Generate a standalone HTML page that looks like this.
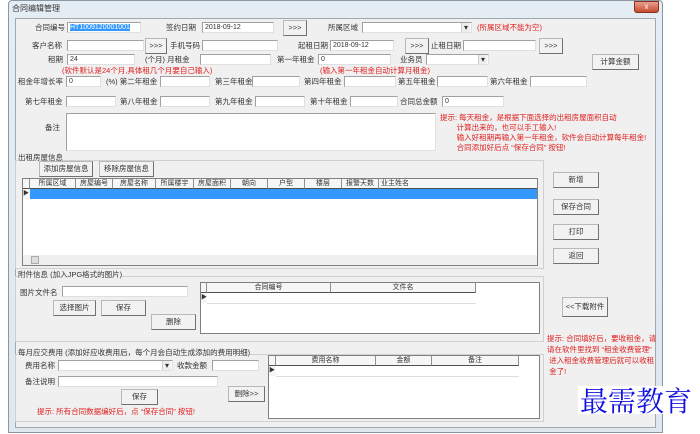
<!DOCTYPE html>
<html><head><meta charset="utf-8"><style>
*{box-sizing:border-box;margin:0;padding:0}
body{width:700px;height:434px;background:#fff;position:relative;overflow:hidden;font-family:"Liberation Sans","Noto Sans CJK SC",sans-serif;font-size:7.5px;color:#333}
.a{position:absolute;white-space:nowrap;line-height:1}
.win{position:absolute;left:8px;top:0;width:655px;height:433px;background:linear-gradient(#e4ecf4,#dfe7ef);border:1px solid #8a96a4;border-radius:4px 4px 0 0}
.cl{position:absolute;left:15px;top:18px;width:641px;height:410px;background:#f0f0f0;border:1px solid #a0a8b0}
.tb{position:absolute;background:#fff;border:1px solid #a0a0a0;border-right-color:#e0e0e0;border-bottom-color:#e0e0e0;height:11px;font-size:7px;padding-left:2px;line-height:9px}
.bt{position:absolute;background:#f2f2f2;border:1px solid #b8b8b8;border-right-color:#707070;border-bottom-color:#707070;font-size:7.5px;text-align:center;line-height:14px;height:16px}
.r{color:#e02020}
.gb{position:absolute;border:1px solid #d0d0d0}
.grid{position:absolute;background:#fff;border:1px solid #808080}
.hd{position:absolute;top:0;height:10px;border-right:1px solid #909090;border-bottom:1px solid #505050;background:#f6f6f6;font-size:7px;text-align:center;line-height:10px}
.cb:after{content:"▾";position:absolute;right:1px;top:0;font-size:8px;width:8px;height:9px;background:#eee;border-left:1px solid #ccc;text-align:center;line-height:9px}
</style></head><body>
<div class="win"></div>
<div class="a" style="left:12px;top:5px;font-size:8px">合同编辑管理</div>
<div style="position:absolute;left:634px;top:1px;width:25px;height:12px;background:linear-gradient(#e8a090,#c84a30);border:1px solid #8a3020;border-radius:0 0 3px 3px;color:#fff;font-size:8px;text-align:center;line-height:10px">x</div>
<div class="cl"></div>

<div class="a" style="left:35px;top:24px">合同编号</div>
<div class="tb" style="left:67px;top:22px;width:74px"><span style="background:#3399ff;color:#fff">HT1009120001001</span></div>
<div class="a" style="left:166px;top:24px">签约日期</div>
<div class="tb" style="left:202px;top:22px;width:72px">2018-09-12</div>
<div class="bt" style="left:283px;top:20px;width:24px">&gt;&gt;&gt;</div>
<div class="a" style="left:328px;top:24px">所属区域</div>
<div class="tb cb" style="left:362px;top:22px;width:110px"></div>
<div class="a r" style="left:477px;top:24px">(所属区域不能为空)</div>

<div class="a" style="left:32px;top:42px">客户名称</div>
<div class="tb" style="left:67px;top:40px;width:77px"></div>
<div class="bt" style="left:145px;top:38px;width:22px">&gt;&gt;&gt;</div>
<div class="a" style="left:170px;top:42px">手机号码</div>
<div class="tb" style="left:202px;top:40px;width:76px"></div>
<div class="a" style="left:298px;top:42px">起租日期</div>
<div class="tb" style="left:330px;top:40px;width:64px">2018-09-12</div>
<div class="bt" style="left:405px;top:38px;width:24px">&gt;&gt;&gt;</div>
<div class="a" style="left:431px;top:42px">止租日期</div>
<div class="tb" style="left:463px;top:40px;width:73px"></div>
<div class="bt" style="left:539px;top:38px;width:24px">&gt;&gt;&gt;</div>

<div class="a" style="left:48px;top:56px">租期</div>
<div class="tb" style="left:67px;top:54px;width:68px">24</div>
<div class="a" style="left:145px;top:56px">(个月) 月租金</div>
<div class="tb" style="left:200px;top:54px;width:71px"></div>
<div class="a" style="left:277px;top:56px">第一年租金</div>
<div class="tb" style="left:318px;top:54px;width:73px">0</div>
<div class="a" style="left:400px;top:56px">业务员</div>
<div class="tb cb" style="left:426px;top:54px;width:63px"></div>
<div class="bt" style="left:592px;top:54px;width:47px">计算金额</div>
<div class="a r" style="left:62px;top:67px">(软件默认是24个月,具体租几个月要自己输入)</div>
<div class="a r" style="left:320px;top:67px">(输入第一年租金自动计算月租金)</div>

<div class="a" style="left:18px;top:78px">租金年增长率</div>
<div class="tb" style="left:66px;top:76px;width:35px">0</div>
<div class="a" style="left:106px;top:78px">(%) 第二年租金</div>
<div class="tb" style="left:160px;top:76px;width:50px"></div>
<div class="a" style="left:215px;top:78px">第三年租金</div>
<div class="tb" style="left:252px;top:76px;width:48px"></div>
<div class="a" style="left:304px;top:78px">第四年租金</div>
<div class="tb" style="left:344px;top:76px;width:52px"></div>
<div class="a" style="left:398px;top:78px">第五年租金</div>
<div class="tb" style="left:437px;top:76px;width:51px"></div>
<div class="a" style="left:490px;top:78px">第六年租金</div>
<div class="tb" style="left:530px;top:76px;width:57px"></div>

<div class="a" style="left:25px;top:98px">第七年租金</div>
<div class="tb" style="left:66px;top:96px;width:50px"></div>
<div class="a" style="left:120px;top:98px">第八年租金</div>
<div class="tb" style="left:160px;top:96px;width:50px"></div>
<div class="a" style="left:215px;top:98px">第九年租金</div>
<div class="tb" style="left:255px;top:96px;width:50px"></div>
<div class="a" style="left:310px;top:98px">第十年租金</div>
<div class="tb" style="left:350px;top:96px;width:48px"></div>
<div class="a" style="left:400px;top:98px">合同总金额</div>
<div class="tb" style="left:442px;top:96px;width:62px">0</div>
<div class="a" style="left:45px;top:124px">备注</div>
<div class="tb" style="left:66px;top:113px;width:370px;height:38px"></div>
<div class="a r" style="left:440px;top:113px;line-height:10px;font-size:7.5px">提示: 每天租金，是根据下面选择的出租房屋面积自动<br>&nbsp;&nbsp;&nbsp;&nbsp;&nbsp;&nbsp;&nbsp;&nbsp;计算出来的，也可以手工输入!<br>&nbsp;&nbsp;&nbsp;&nbsp;&nbsp;&nbsp;&nbsp;&nbsp;输入好租期再输入第一年租金，软件会自动计算每年租金!<br>&nbsp;&nbsp;&nbsp;&nbsp;&nbsp;&nbsp;&nbsp;&nbsp;合同添加好后点 “保存合同” 按钮!</div>

<div class="gb" style="left:15px;top:160px;width:529px;height:109px"></div>
<div class="a" style="left:18px;top:154px;background:#f0f0f0">出租房屋信息</div>
<div class="bt" style="left:39px;top:161px;width:54px">添加房屋信息</div>
<div class="bt" style="left:99px;top:161px;width:55px">移除房屋信息</div>
<div class="grid" style="left:22px;top:178px;width:516px;height:88px;overflow:hidden">
<div class="hd" style="left:0;width:7px"></div>
<div class="hd" style="left:7px;width:46px">所属区域</div>
<div class="hd" style="left:53px;width:37px">房屋编号</div>
<div class="hd" style="left:90px;width:43px">房屋名称</div>
<div class="hd" style="left:133px;width:38px">所属楼宇</div>
<div class="hd" style="left:171px;width:37px">房屋面积</div>
<div class="hd" style="left:208px;width:37px">朝向</div>
<div class="hd" style="left:245px;width:37px">户型</div>
<div class="hd" style="left:282px;width:37px">楼层</div>
<div class="hd" style="left:319px;width:37px">报警天数</div>
<div class="hd" style="left:356px;width:160px;text-align:left;border-right:none">&nbsp;业主姓名</div>
<div style="position:absolute;left:7px;top:10px;width:509px;height:10px;background:#3399ff"></div>
<div style="position:absolute;left:0;top:10px;width:7px;height:10px;background:#f6f6f6;font-size:6px;line-height:10px">▶</div>
<div style="position:absolute;left:0;top:76px;width:516px;height:10px;background:#f0f0f0"><div style="position:absolute;left:8px;top:1px;width:8px;height:8px;background:#ddd;border:1px solid #aaa"></div></div>
</div>
<div class="bt" style="left:553px;top:172px;width:46px">新增</div>
<div class="bt" style="left:553px;top:199px;width:46px">保存合同</div>
<div class="bt" style="left:553px;top:224px;width:46px">打印</div>
<div class="bt" style="left:553px;top:248px;width:46px">返回</div>

<div class="gb" style="left:15px;top:276px;width:529px;height:66px"></div>
<div class="a" style="left:18px;top:271px;background:#f0f0f0">附件信息 (加入JPG格式的图片)</div>
<div class="a" style="left:20px;top:289px">图片文件名</div>
<div class="tb" style="left:62px;top:286px;width:126px"></div>
<div class="bt" style="left:53px;top:300px;width:43px">选择图片</div>
<div class="bt" style="left:101px;top:300px;width:45px">保存</div>
<div class="bt" style="left:151px;top:314px;width:45px">删除</div>
<div class="grid" style="left:200px;top:282px;width:340px;height:52px;overflow:hidden">
<div class="hd" style="left:0;width:6px"></div>
<div class="hd" style="left:6px;width:124px">合同编号</div>
<div class="hd" style="left:130px;width:145px">文件名</div>
<div style="position:absolute;left:0;top:10px;width:6px;height:10px;background:#f6f6f6;font-size:6px;line-height:10px">▶</div>
<div style="position:absolute;left:6px;top:20px;width:269px;border-top:1px solid #ddd"></div>
</div>
<div class="bt" style="left:562px;top:297px;width:46px;height:20px;line-height:18px">&lt;&lt;下载附件</div>
<div class="a r" style="left:547px;top:333px;line-height:11px;font-size:7.5px">提示: 合同填好后，要收租金，请<br>请在软件里找到 “租金收费管理”<br>&nbsp;进入租金收费管理后就可以收租<br>&nbsp;金了!</div>

<div class="gb" style="left:15px;top:354px;width:529px;height:68px"></div>
<div class="a" style="left:18px;top:349px;background:#f0f0f0">每月应交费用 (添加好应收费用后，每个月会自动生成添加的费用明细)</div>
<div class="a" style="left:25px;top:362px">费用名称</div>
<div class="tb cb" style="left:58px;top:360px;width:115px"></div>
<div class="a" style="left:177px;top:362px">收款金额</div>
<div class="tb" style="left:212px;top:360px;width:47px"></div>
<div class="a" style="left:25px;top:378px">备注说明</div>
<div class="tb" style="left:58px;top:376px;width:160px"></div>
<div class="bt" style="left:121px;top:389px;width:37px">保存</div>
<div class="bt" style="left:228px;top:386px;width:37px">删除&gt;&gt;</div>
<div class="a r" style="left:37px;top:408px">提示: 所有合同数据编好后，点 “保存合同” 按钮!</div>
<div class="grid" style="left:268px;top:355px;width:272px;height:64px;overflow:hidden">
<div class="hd" style="left:0;width:7px"></div>
<div class="hd" style="left:7px;width:100px">费用名称</div>
<div class="hd" style="left:107px;width:56px">金额</div>
<div class="hd" style="left:163px;width:87px">备注</div>
<div style="position:absolute;left:0;top:10px;width:7px;height:10px;background:#f6f6f6;font-size:6px;line-height:10px">▶</div>
<div style="position:absolute;left:7px;top:20px;width:243px;border-top:1px solid #ddd"></div>
</div>
<div class="a" style="left:578px;top:386px;font-family:'Noto Serif CJK SC','Liberation Serif',serif;font-size:28px;color:#1010e0;background:#fff;padding:0 2px">最需教育</div>
</body></html>
